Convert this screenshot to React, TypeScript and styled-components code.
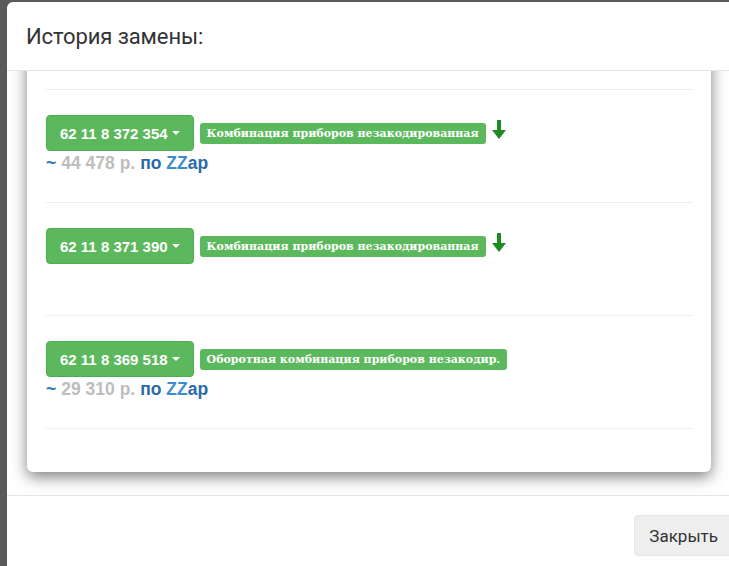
import React from "react";
import styled, { createGlobalStyle } from "styled-components";

const Global = createGlobalStyle`
  html, body { margin: 0; padding: 0; }
  *, *::before, *::after { box-sizing: border-box; }
  body {
    background: #5a5a5a;
    overflow: hidden;
    font-family: "Liberation Sans", Arial, sans-serif;
  }
`;

const Page = styled.div`
  width: 729px;
  height: 566px;
  overflow: hidden;
  padding: 2px 0 0 7px;
`;

const Modal = styled.div`
  width: 742px;
  height: 600px;
  background: #fff;
  border-radius: 6px;
  display: flex;
  flex-direction: column;
`;

const Header = styled.div`
  height: 69px;
  border-bottom: 1px solid #e5e5e5;
  display: flex;
  align-items: center;
  padding-left: 19px;
  flex-shrink: 0;
`;

const Title = styled.h4`
  margin: 0;
  font-family: Roboto, "Liberation Sans", sans-serif;
  font-weight: 400;
  font-size: 22px;
  color: #333;
  letter-spacing: -0.1px;
`;

const Body = styled.div`
  height: 424px;
  overflow: hidden;
  display: flex;
  flex-direction: column;
  justify-content: flex-end;
  padding: 0 38px 23px 20px;
  flex-shrink: 0;
`;

const Card = styled.div`
  flex-shrink: 0;
  background: #fff;
  border-radius: 0 0 6px 6px;
  box-shadow: 0 5px 15px rgba(0, 0, 0, 0.5);
  padding: 0 18px 43px 19px;
`;

const Spacer = styled.div`
  height: 150px;
`;

const Item = styled.div`
  border-top: 1px solid #eee;
  padding: 25px 0 27px;
  &:last-child {
    border-bottom: 1px solid #eee;
  }
`;

const Row = styled.div`
  display: flex;
  align-items: center;
  gap: 6px;
  height: 36px;
`;

const PartButton = styled.button`
  height: 36px;
  padding: 0 13px 0 13px;
  background: #5cb85c;
  border: 1px solid #4cae4c;
  border-radius: 4px;
  color: #fff;
  font-family: "Liberation Sans", Arial, sans-serif;
  font-weight: 700;
  font-size: 15px;
  display: flex;
  align-items: center;
  gap: 4px;
  cursor: pointer;
`;

const Caret = styled.span`
  width: 0;
  height: 0;
  border-left: 4px solid transparent;
  border-right: 4px solid transparent;
  border-top: 4px solid #fff;
`;

const Label = styled.span`
  height: 21px;
  display: inline-flex;
  align-items: center;
  padding: 0 7px;
  background: #5cb85c;
  border-radius: 3px;
  color: #fff;
  font-family: "DejaVu Serif", "Liberation Serif", serif;
  font-weight: 700;
  font-size: 11px;
  white-space: nowrap;
`;

const ArrowWrap = styled.span`
  display: inline-flex;
  margin-top: -8px;
`;

const Price = styled.div`
  height: 24px;
  display: flex;
  align-items: center;
  font-family: "Liberation Sans", Arial, sans-serif;
  font-weight: 700;
  font-size: 17.5px;
  gap: 5px;
`;

const Tilde = styled.span`
  color: #337ab7;
`;

const Amount = styled.span`
  color: #bdbdbd;
`;

const ZLink = styled.a`
  color: #2a6aa8;
  text-decoration: none;
`;

const ZZ = styled.span`
  color: #3b8dd0;
`;

const Footer = styled.div`
  border-top: 1px solid #e5e5e5;
  padding: 19px 16px 0 0;
  display: flex;
  justify-content: flex-end;
`;

const CloseButton = styled.button`
  height: 41px;
  padding: 0 14px;
  background: #eeeeee;
  border: 1px solid #e6e6e6;
  border-radius: 4px;
  font-family: Roboto, "Liberation Sans", sans-serif;
  font-size: 17px;
  color: #333;
  cursor: pointer;
`;

const DownArrow = () => (
  <svg width="14" height="19" viewBox="0 0 14 19">
    <path d="M5 0 H9 V10 H14 L7 19 L0 10 H5 Z" fill="#1f8a1f" />
  </svg>
);

type Part = { code: string; name: string; arrow: boolean; price?: string };

const parts: Part[] = [
  { code: "62 11 8 372 354", name: "Комбинация приборов незакодированная", arrow: true, price: "44 478" },
  { code: "62 11 8 371 390", name: "Комбинация приборов незакодированная", arrow: true },
  { code: "62 11 8 369 518", name: "Оборотная комбинация приборов незакодир.", arrow: false, price: "29 310" },
];

export default function App() {
  return (
    <>
      <Global />
      <Page>
        <Modal>
          <Header>
            <Title>История замены:</Title>
          </Header>
          <Body>
            <Card>
              <Spacer />
              {parts.map((p) => (
                <Item key={p.code}>
                  <Row>
                    <PartButton>
                      {p.code}
                      <Caret />
                    </PartButton>
                    <Label>{p.name}</Label>
                    {p.arrow && (
                      <ArrowWrap>
                        <DownArrow />
                      </ArrowWrap>
                    )}
                  </Row>
                  <Price>
                    {p.price && (
                      <>
                        <Tilde>~</Tilde>
                        <Amount>{p.price} р.</Amount>
                        <ZLink href="#">
                          по <ZZ>ZZ</ZZ>ap
                        </ZLink>
                      </>
                    )}
                  </Price>
                </Item>
              ))}
            </Card>
          </Body>
          <Footer>
            <CloseButton>Закрыть</CloseButton>
          </Footer>
        </Modal>
      </Page>
    </>
  );
}
